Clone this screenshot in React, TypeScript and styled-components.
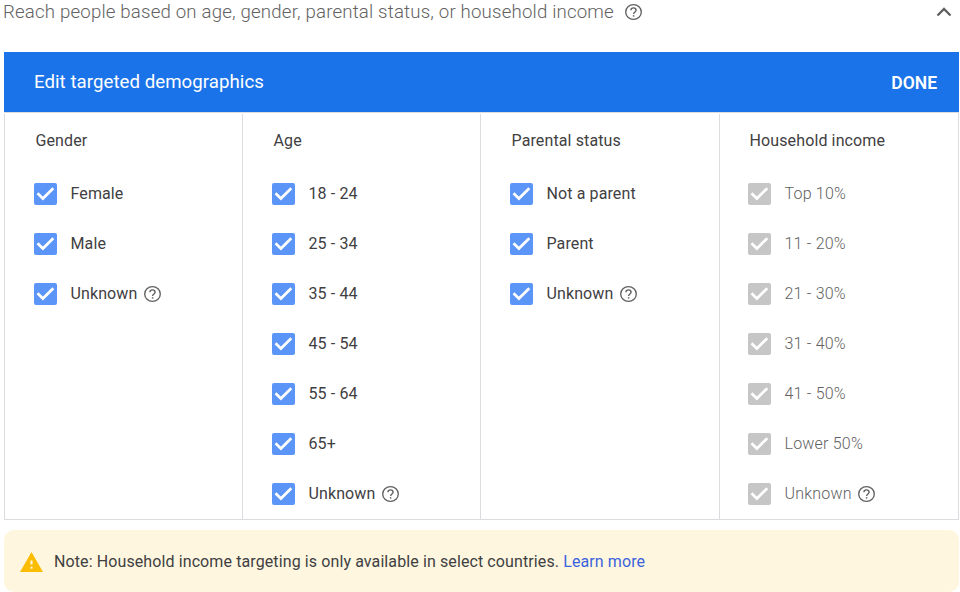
import React from 'react';
import styled, { createGlobalStyle } from 'styled-components';

const GlobalStyle = createGlobalStyle`
  * { box-sizing: border-box; }
  body { margin: 0; background: #fff; overflow: hidden; font-family: Roboto, sans-serif; }
`;

const Page = styled.div`
  width: 960px;
  height: 592px;
  padding: 0 1px 0 4px;
  display: flex;
  flex-direction: column;
`;

const Summary = styled.header`
  height: 52px;
  margin-left: -1px;
  padding-right: 7px;
  display: flex;
  align-items: flex-start;
  color: #626262;
  font-size: 18.67px;
  font-weight: 300;
  line-height: 24px;
  letter-spacing: 0.172px;
  white-space: nowrap;
`;

const SummaryText = styled.span`
  flex: 1;
  display: flex;
  gap: 11px;
`;

const Icon = styled.svg<{ $top?: number; $color?: string }>`
  display: block;
  flex: none;
  margin-top: ${p => p.$top ?? 0}px;
  color: ${p => p.$color ?? '#616161'};
`;

const Banner = styled.div`
  height: 60px;
  padding: 0 22px 0 30px;
  display: flex;
  align-items: center;
  justify-content: space-between;
  background: #1a73e8;
  color: #fff;
`;

const BannerTitle = styled.h1`
  margin: 0;
  padding-bottom: 1px;
  font-size: 18.67px;
  font-weight: 400;
  line-height: 22px;
  letter-spacing: 0.04px;
`;

const DoneButton = styled.button`
  border: 0;
  padding: 2px 0 0;
  background: none;
  color: inherit;
  font: 600 17.500px Roboto, sans-serif;
`;

const Columns = styled.div`
  height: 408px;
  display: grid;
  grid-template-columns: 238px 238px 239px 239px;
  border: 1px solid #dadce0;
  border-left: 0;
  padding-top: 1px;
`;

const Column = styled.section`
  border-left: 1px solid #dadce0;
  padding: 14px 0 0 29px;
  color: #3f4042;
  font-size: 16px;

  &:last-child {
    padding-left: 28px;
  }
`;

const Heading = styled.h2`
  margin: 0 0 16px 1.5px;
  font-size: 16px;
  font-weight: 400;
  line-height: 25px;
  letter-spacing: 0.12px;
`;

const Option = styled.div<{ $disabled?: boolean }>`
  height: 50px;
  display: flex;
  align-items: center;
  color: ${p => (p.$disabled ? '#626262' : '#3f4042')};
  font-weight: ${p => (p.$disabled ? 300 : 400)};
  letter-spacing: ${p => (p.$disabled ? 0.2 : 0.11)}px;
`;

const Box = styled.span<{ $disabled?: boolean }>`
  width: 23px;
  height: 22px;
  margin-right: 13.5px;
  border-radius: 2px;
  background: ${p => (p.$disabled ? '#c6c6c6' : '#5b95f7')};
`;

const Label = styled.span`
  margin-right: 6.5px;
  padding-bottom: 2px;
`;

const Note = styled.aside`
  height: 62px;
  margin-top: 10px;
  padding-left: 16px;
  display: flex;
  align-items: center;
  gap: 11px;
  border-radius: 10px;
  background: #fef6df;
  color: #3f4042;
  font-size: 16px;
  letter-spacing: 0.105px;
`;

const Link = styled.a`
  color: #3b63dc;
`;

const Help = ({ top = 0 }: { top?: number }) => (
  <Icon $top={top} width="17" height="16" viewBox="0 0 17 17" preserveAspectRatio="none" fill="none" stroke="currentColor">
    <circle cx="8.5" cy="8.5" r="7.8" strokeWidth="1.35" />
    <path d="M5.9 6.700a2.600 2.600 0 0 1 5.200 0c0 1.700-2.500 1.900-2.500 4" strokeWidth="1.400" />
    <path d="M8.600 11.900v1.500" strokeWidth="1.500" />
  </Icon>
);

const groups = [
  { title: 'Gender', options: ['Female', 'Male', 'Unknown'] },
  { title: 'Age', options: ['18 - 24', '25 - 34', '35 - 44', '45 - 54', '55 - 64', '65+', 'Unknown'] },
  { title: 'Parental status', options: ['Not a parent', 'Parent', 'Unknown'] },
  {
    title: 'Household income',
    disabled: true,
    options: ['Top 10%', '11 - 20%', '21 - 30%', '31 - 40%', '41 - 50%', 'Lower 50%', 'Unknown'],
  },
];

export default function App() {
  return (
    <>
      <GlobalStyle />
      <Page>
        <Summary>
          <SummaryText>
            Reach people based on age, gender, parental status, or household income
            <Help top={4} />
          </SummaryText>
          <Icon $top={7} width="16" height="10" viewBox="0 0 16 10" fill="none">
            <path d="M1.5 8.5L8 2l6.500 6.500" stroke="currentColor" strokeWidth="2.3" />
          </Icon>
        </Summary>
        <Banner>
          <BannerTitle>Edit targeted demographics</BannerTitle>
          <DoneButton>DONE</DoneButton>
        </Banner>
        <Columns>
          {groups.map(g => (
            <Column key={g.title}>
              <Heading>{g.title}</Heading>
              {g.options.map(o => (
                <Option key={o} $disabled={g.disabled}>
                  <Box $disabled={g.disabled}>
                    <Icon $color="#fff" width="23" height="22" viewBox="0 0 23 22" fill="none">
                      <path d="M3.500 10.300l5.400 5.200L19.300 5.200" stroke="currentColor" strokeWidth="2.700" />
                    </Icon>
                  </Box>
                  <Label>{o}</Label>
                  {o === 'Unknown' && <Help />}
                </Option>
              ))}
            </Column>
          ))}
        </Columns>
        <Note>
          <Icon $color="#fbbc04" $top={1} width="23" height="20" viewBox="1 2 22 19" fill="currentColor">
            <path d="M1 21h22L12 2 1 21zm12-3h-2v-2h2v2zm0-4h-2v-4h2v4z" />
          </Icon>
          <span>
            Note: Household income targeting is only available in select countries. <Link>Learn more</Link>
          </span>
        </Note>
      </Page>
    </>
  );
}
